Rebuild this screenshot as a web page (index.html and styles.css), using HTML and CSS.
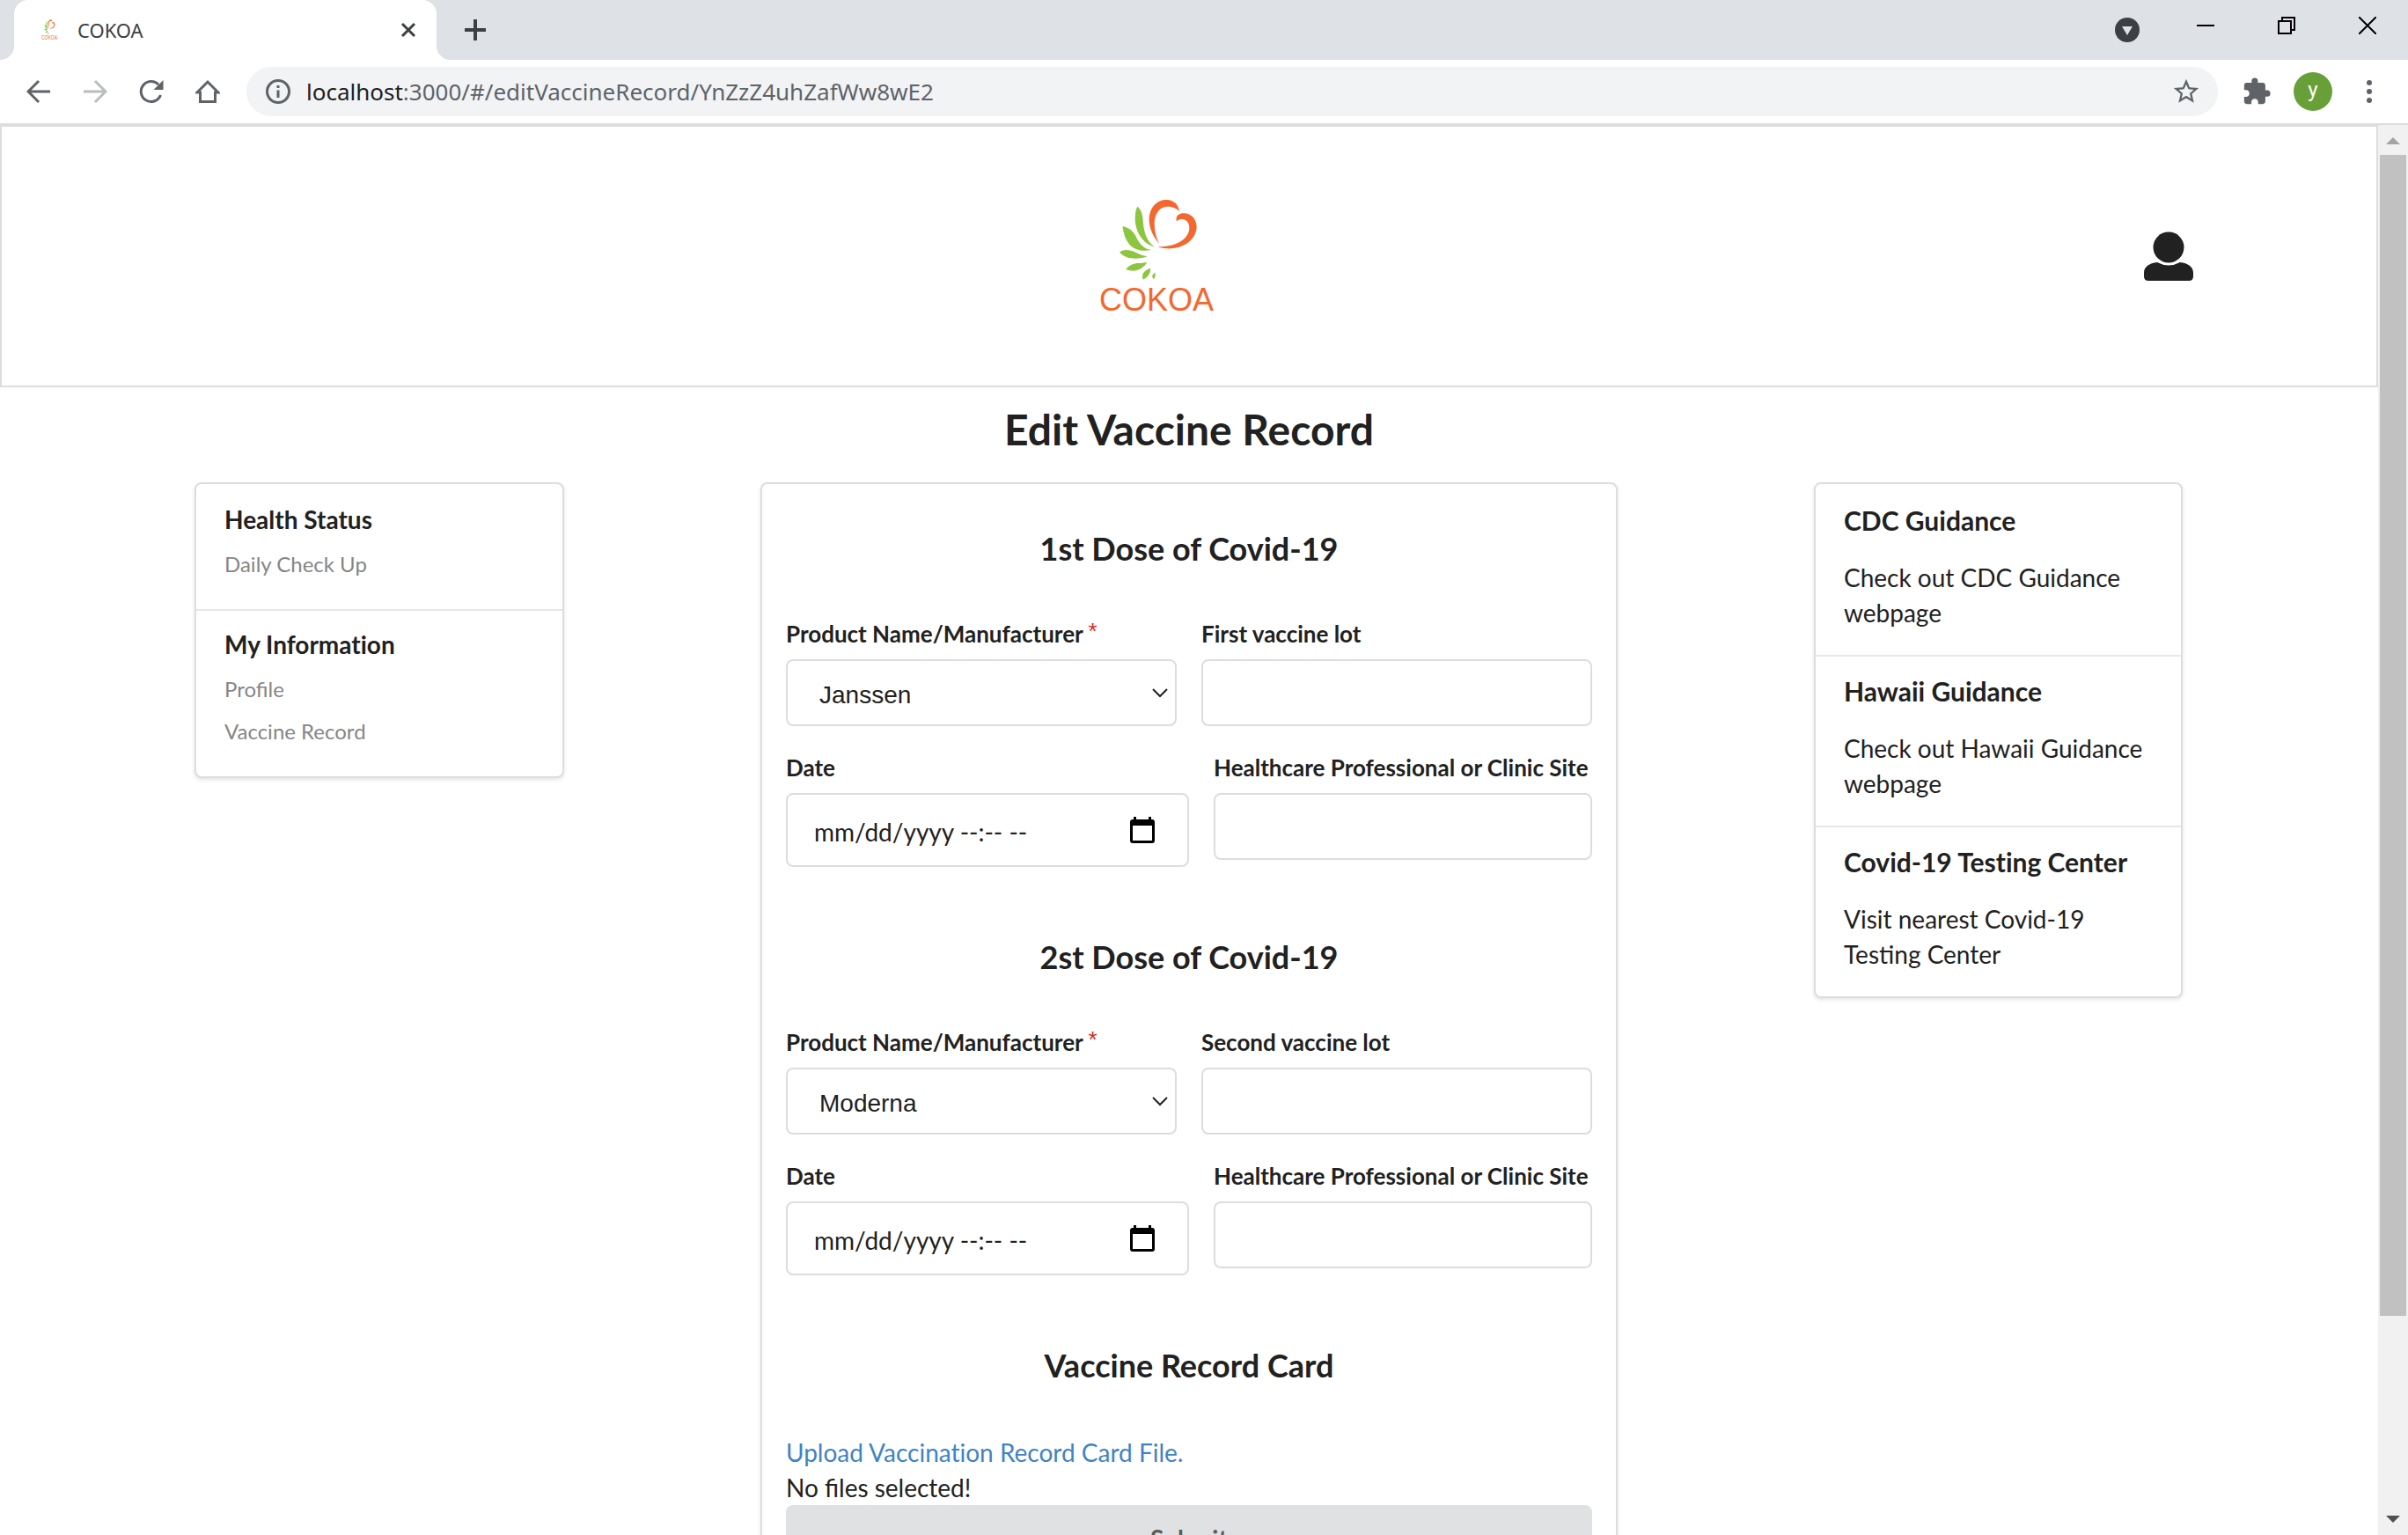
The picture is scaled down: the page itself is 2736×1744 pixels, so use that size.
FILE: index.html
```html
<!DOCTYPE html>
<html lang="en">
<head>
<meta charset="utf-8">
<title>COKOA</title>
<link rel="stylesheet" href="styles.css">
</head>
<body>
<div class="browser">
  <header class="tab-strip">
    <div class="tab">
      <svg class="favicon" preserveAspectRatio="none" viewBox="66 30 432 426" aria-hidden="true"><use href="#logo"/></svg>
      <span class="tab-title">COKOA</span>
      <button class="icon-button tab-close" aria-label="Close tab"><svg width="20" height="20" viewBox="0 0 20 20"><path d="M3 3L17 17M17 3L3 17" stroke="#3c4043" stroke-width="3"/></svg></button>
    </div>
    <button class="icon-button new-tab" aria-label="New tab"><svg width="24" height="24" viewBox="0 0 24 24"><path d="M12 0V24M0 12H24" stroke="#3c4043" stroke-width="4"/></svg></button>
    <button class="icon-button tab-search" aria-label="Search tabs"><svg width="28" height="28" viewBox="0 0 28 28"><circle cx="14" cy="14" r="14" fill="#3c4043"/><path d="M8 10H20L14 20z" fill="#dee1e6"/></svg></button>
    <div class="window-controls">
      <button class="icon-button window-button" aria-label="Minimize"><svg width="20" height="20" viewBox="0 0 20 20"><path d="M0 10H20" stroke="#000" stroke-width="2"/></svg></button>
      <button class="icon-button window-button" aria-label="Restore"><svg width="20" height="20" viewBox="0 0 20 20"><path d="M1 5H15V19H1zM5 5V1H19V15H15" fill="none" stroke="#000" stroke-width="2"/></svg></button>
      <button class="icon-button window-button" aria-label="Close window"><svg width="20" height="20" viewBox="0 0 20 20"><path d="M0 0L20 20M20 0L0 20" stroke="#000" stroke-width="2"/></svg></button>
    </div>
  </header>

  <nav class="toolbar" aria-label="Browser toolbar">
    <button class="icon-button tool" aria-label="Back"><svg width="28" height="28" viewBox="0 0 28 28"><path d="M27 14H3M14 2L2 14L14 26" fill="none" stroke="#5f6368" stroke-width="3"/></svg></button>
    <button class="icon-button tool" aria-label="Forward"><svg width="28" height="28" viewBox="0 0 28 28"><path d="M1 14H25M14 2L26 14L14 26" fill="none" stroke="#babcbe" stroke-width="3"/></svg></button>
    <button class="icon-button tool" aria-label="Reload"><svg width="28" height="28" viewBox="0 0 28 28"><path d="M24.500 18A11.500 11.500 0 1 1 22 6" fill="none" stroke="#5f6368" stroke-width="3"/><path d="M27.500 1V12H16.500z" fill="#5f6368"/></svg></button>
    <button class="icon-button tool" aria-label="Home"><svg width="28" height="28" viewBox="0 0 28 28"><path d="M2 15L14 3L26 15H22.500V25.500H5.500V15z" fill="none" stroke="#5f6368" stroke-width="3"/></svg></button>
    <div class="omnibox">
      <svg width="28" height="28" viewBox="0 0 28 28"><circle cx="14" cy="14" r="12.500" fill="none" stroke="#5f6368" stroke-width="3"/><path d="M14 12.500V21M14 7V10" stroke="#5f6368" stroke-width="3"/></svg>
      <span class="url"><span class="host">localhost</span>:3000/#/editVaccineRecord/YnZzZ4uhZafWw8wE2</span>
      <button class="icon-button star" aria-label="Bookmark this page"><svg width="34" height="34" viewBox="0 0 24 24"><path d="M22 9.240l-7.190-.620L12 2 9.190 8.630 2 9.240l5.460 4.730L5.820 21 12 17.270 18.180 21l-1.630-7.030L22 9.240zM12 15.400l-3.760 2.270 1-4.280-3.320-2.880 4.380-.380L12 6.100l1.710 4.040 4.380.380-3.320 2.880 1 4.280L12 15.400z" fill="#5f6368"/></svg></button>
    </div>
    <button class="icon-button tool" aria-label="Extensions"><svg width="34" height="34" viewBox="0 0 24 24"><path d="M20.500 11H19V7c0-1.100-.900-2-2-2h-4V3.500a2.500 2.500 0 0 0-5 0V5H4c-1.100 0-1.990.900-1.990 2v3.800H3.500c1.490 0 2.700 1.210 2.700 2.700s-1.210 2.700-2.700 2.700H2V20c0 1.100.900 2 2 2h3.800v-1.500c0-1.490 1.210-2.700 2.700-2.700s2.700 1.210 2.700 2.700V22H17c1.100 0 2-.900 2-2v-4h1.500a2.500 2.500 0 0 0 0-5z" fill="#5f6368"/></svg></button>
    <button class="avatar" aria-label="Profile y">y</button>
    <button class="icon-button tool" aria-label="Menu"><svg width="28" height="28" viewBox="0 0 28 28"><g fill="#5f6368"><circle cx="14" cy="4" r="3"/><circle cx="14" cy="14" r="3"/><circle cx="14" cy="24" r="3"/></g></svg></button>
  </nav>

  <div class="viewport">
    <div class="page">
      <header class="site-header">
        <a href="#/" aria-label="COKOA home">
          <svg width="144" height="142" viewBox="66 30 432 426">
            <g id="logo">
              <g fill="#f4672e">
                <path d="M291 200C265 170 257 140 257 118C258 75 285 51 317 51C340 52 357 66 360 90C348 78 335 74 320 74C295 74 276 95 275 130C275 155 280 180 291 200z"/>
                <path d="M287 211C340 212 392 190 394 148C395 128 382 117 368 117C360 117 355 120 351 124C346 108 356 97 376 97C402 98 418 118 419 143C417 190 370 220 315 217C303 216 294 214 287 211z"/>
                <text x="282" y="430" text-anchor="middle" font-family="Liberation Sans, Arial, sans-serif" font-size="108">COKOA</text>
              </g>
              <g fill="#8cc63f">
                <path d="M217 74C228 82 234 96 236 120C238 155 245 190 276 212C240 203 209 165 209 115C209 95 212 82 217 74z"/>
                <path d="M166 142C190 145 205 160 215 182C225 202 240 218 265 222C235 228 205 222 190 203C172 182 170 160 166 142z"/>
                <path d="M156 230C165 222 178 220 195 224C215 230 230 242 252 243C235 250 215 253 195 250C175 247 165 238 156 230z"/>
                <path d="M178 288C188 274 205 267 222 267C235 267 243 265 250 264C240 280 225 292 205 293C195 293 186 291 178 288z"/>
                <path d="M261 284C263 300 255 313 236 323C230 305 238 292 261 284z"/>
                <path d="M278 299C279 308 278 315 273 321C266 316 264 306 278 299z"/>
              </g>
            </g>
          </svg>
        </a>
        <a href="#/profile" aria-label="Account"><svg width="56" height="56" viewBox="0 0 56 56"><circle cx="28" cy="18" r="17.500" fill="#212121"/><path d="M15 35Q28 42 41 35C50 36 56 40 56 47V51Q56 56 51 56H5Q0 56 0 51V47C0 40 6 36 15 35z" fill="#212121"/></svg></a>
      </header>

      <h1 class="page-title">Edit Vaccine Record</h1>

      <div class="columns">
        <aside class="card">
          <section class="card-section nav-section">
            <h2 class="card-title">Health Status</h2>
            <a class="nav-link" href="#/checkup">Daily Check Up</a>
          </section>
          <section class="card-section nav-section">
            <h2 class="card-title">My Information</h2>
            <a class="nav-link" href="#/profile">Profile</a>
            <a class="nav-link" href="#/vaccine">Vaccine Record</a>
          </section>
        </aside>

        <form class="card form-card">
          <section class="form-section">
            <h2 class="form-heading">1st Dose of Covid-19</h2>
            <div class="row">
              <div class="field">
                <label for="product1">Product Name/Manufacturer <span class="required">*</span></label>
                <select id="product1" class="control"><option>Janssen</option><option>Moderna</option><option>Pfizer</option></select>
              </div>
              <div class="field"><label for="lot1">First vaccine lot</label><input id="lot1" class="control" type="text"></div>
            </div>
            <div class="row row-date">
              <div class="field">
                <label for="date1">Date</label>
                <div class="control date-control">
                  <input id="date1" class="date-input" type="text" placeholder="mm/dd/yyyy --:-- --">
                  <button class="icon-button" type="button" aria-label="Open calendar"><svg width="28" height="30" viewBox="0 0 28 30"><path d="M4 0H7V3H21V0H24V3H25Q28 3 28 6V27Q28 30 25 30H3Q0 30 0 27V6Q0 3 3 3H4zM3 10V27H25V10z" fill-rule="evenodd"/></svg></button>
                </div>
              </div>
              <div class="field"><label for="site1">Healthcare Professional or Clinic Site</label><input id="site1" class="control" type="text"></div>
            </div>
          </section>

          <section class="form-section">
            <h2 class="form-heading">2st Dose of Covid-19</h2>
            <div class="row">
              <div class="field">
                <label for="product2">Product Name/Manufacturer <span class="required">*</span></label>
                <select id="product2" class="control"><option>Moderna</option><option>Janssen</option><option>Pfizer</option></select>
              </div>
              <div class="field"><label for="lot2">Second vaccine lot</label><input id="lot2" class="control" type="text"></div>
            </div>
            <div class="row row-date">
              <div class="field">
                <label for="date2">Date</label>
                <div class="control date-control">
                  <input id="date2" class="date-input" type="text" placeholder="mm/dd/yyyy --:-- --">
                  <button class="icon-button" type="button" aria-label="Open calendar"><svg width="28" height="30" viewBox="0 0 28 30"><path d="M4 0H7V3H21V0H24V3H25Q28 3 28 6V27Q28 30 25 30H3Q0 30 0 27V6Q0 3 3 3H4zM3 10V27H25V10z" fill-rule="evenodd"/></svg></button>
                </div>
              </div>
              <div class="field"><label for="site2">Healthcare Professional or Clinic Site</label><input id="site2" class="control" type="text"></div>
            </div>
          </section>

          <section class="form-section">
            <h2 class="form-heading">Vaccine Record Card</h2>
            <a class="upload" href="#upload">Upload Vaccination Record Card File.</a>
            <p class="upload-status">No files selected!</p>
            <button class="submit" type="submit">Submit</button>
          </section>
        </form>

        <aside class="card guidance">
          <section class="card-section">
            <h2 class="card-title">CDC Guidance</h2>
            <p class="card-text">Check out CDC Guidance webpage</p>
          </section>
          <section class="card-section">
            <h2 class="card-title">Hawaii Guidance</h2>
            <p class="card-text">Check out Hawaii Guidance webpage</p>
          </section>
          <section class="card-section">
            <h2 class="card-title">Covid-19 Testing Center</h2>
            <p class="card-text">Visit nearest Covid-19 Testing Center</p>
          </section>
        </aside>
      </div>
    </div>

    <div class="scrollbar" aria-hidden="true">
      <svg class="scroll-arrow" viewBox="0 0 34 34"><path d="M9 22L17 14L25 22z" fill="#a3a3a3"/></svg>
      <div class="scroll-track"><div class="scroll-thumb"></div></div>
      <svg class="scroll-arrow" viewBox="0 0 34 34"><path d="M9 12L17 20L25 12z" fill="#505050"/></svg>
    </div>
  </div>
</div>
</body>
</html>
```
FILE: styles.css
```css
* { box-sizing: border-box; }

body {
  margin: 0;
  font-family: Lato, "Open Sans", sans-serif;
  font-size: 28px;
  line-height: 40px;
  color: #212121;
  background: #fff;
}

h1, h2, p { margin: 0; }
a { color: #4183c4; text-decoration: none; }
svg { display: block; flex: none; }

.browser {
  display: flex;
  flex-direction: column;
  height: 100vh;
  overflow: hidden;
}

.icon-button {
  display: flex;
  flex: none;
  align-items: center;
  justify-content: center;
  padding: 0;
  border: 0;
  background: none;
}

/* Tab strip */
.tab-strip {
  display: flex;
  flex: none;
  height: 68px;
  padding-left: 16px;
  background: #dee1e6;
}

.tab {
  position: relative;
  display: flex;
  align-items: center;
  width: 480px;
  padding: 0 22px 0 30px;
  border-radius: 16px 16px 0 0;
  background: #fff;
}

.tab::before,
.tab::after {
  content: "";
  position: absolute;
  bottom: 0;
  width: 16px;
  height: 16px;
}

.tab::before {
  left: -16px;
  background: radial-gradient(circle at 0 0, transparent 16px, #fff 16px);
}

.tab::after {
  right: -16px;
  background: radial-gradient(circle at 100% 0, transparent 16px, #fff 16px);
}

.favicon { width: 20px; height: 26px; margin-right: 22px; }

.tab-title,
.url { font-family: "Noto Sans", "Open Sans", sans-serif; }

.tab-title { font-size: 22px; color: #3c4043; }
.tab-close { margin-left: auto; }
.new-tab { width: 56px; margin-left: 16px; }
.tab-search { width: 86px; margin-left: auto; }
.window-controls { display: flex; height: 58px; }
.window-button { width: 92px; }

/* Toolbar */
.toolbar {
  display: flex;
  flex: none;
  align-items: center;
  gap: 8px;
  height: 74px;
  padding: 0 16px;
  border-bottom: 2px solid #ddd;
}

.tool { width: 56px; height: 56px; }

.omnibox {
  display: flex;
  flex: 1;
  align-items: center;
  gap: 18px;
  height: 56px;
  margin: 0 8px;
  padding: 0 19px 0 22px;
  border-radius: 28px;
  background: #f1f3f4;
}

.url { font-size: 26px; color: #5f6368; }
.host { color: #202124; }
.star { margin-left: auto; }

.avatar {
  width: 44px;
  height: 44px;
  margin: 0 6px;
  padding: 0 0 4px;
  border: 0;
  border-radius: 50%;
  background: #689f38;
  color: #fff;
  font: 24px Roboto, sans-serif;
}

/* Page */
.viewport {
  display: flex;
  flex: 1;
  min-height: 0;
}

.page { flex: 1; overflow: hidden; }

.site-header {
  display: flex;
  align-items: center;
  justify-content: space-between;
  height: 298px;
  padding: 0 208px 0 45.9%;
  border: 2px solid #ddd;
}

.page-title {
  margin: 18px 0 30px;
  font-size: 48px;
  line-height: 60px;
  text-align: center;
}

.columns {
  display: grid;
  grid-template-columns: 420fr 974fr 419fr;
  align-items: start;
  column-gap: 223px;
  padding: 0 222px 0 221px;
}

.card {
  padding-top: 2px;
  border: 2px solid #ddd;
  border-radius: 8px;
  background: #fff;
  box-shadow: 0 2px 4px rgba(34, 36, 38, .12);
}

.card-section { padding: 21px 32px 28px; }
.nav-section { padding: 20px 32px 33px; }
.card-section + .card-section { border-top: 2px solid #e8e8e8; }

.card-title {
  font-size: 28px;
  line-height: 36px;
  font-variant-ligatures: none;
}

.guidance .card-title { font-size: 30px; }
.card-text { margin-top: 27px; }

.nav-link {
  display: block;
  margin-top: 12px;
  font-size: 24px;
  line-height: 36px;
  color: #868686;
}

.card-title + .nav-link { margin-top: 15px; }

/* Form */
.form-card { padding: 50px 27px; }
.form-section + .form-section { margin-top: 79px; }

.form-heading {
  margin-bottom: 56px;
  font-size: 36px;
  line-height: 46px;
  text-align: center;
}

.row {
  display: grid;
  grid-template-columns: 1fr 1fr;
  align-items: start;
  gap: 28px;
}

.row-date {
  grid-template-columns: 458fr 430fr;
  margin-top: 29px;
}

.field { display: flex; flex-direction: column; gap: 11px; min-width: 0; }

.field label {
  font-size: 26px;
  font-weight: bold;
  line-height: 36px;
  white-space: nowrap;
}

.required {
  font-family: "Liberation Sans", Arial, sans-serif;
  font-weight: normal;
  line-height: 0;
  vertical-align: 4px;
  color: #db2828;
}

.control {
  width: 100%;
  height: 76px;
  margin: 0;
  padding: 4px 28px 0;
  border: 2px solid #ddd;
  border-radius: 8px;
  background: #fff;
  color: #212121;
  font: 28px Lato, sans-serif;
}

select.control {
  appearance: none;
  padding: 4px 36px 0;
  font-family: "Liberation Sans", Arial, sans-serif;
  background: #fff url("data:image/svg+xml,%3Csvg xmlns='http://www.w3.org/2000/svg' width='18' height='11'%3E%3Cpath d='M1 1L9 9L17 1' fill='none' stroke='%23212121' stroke-width='2'/%3E%3C/svg%3E") no-repeat right 8px center;
}

.date-control {
  display: flex;
  align-items: center;
  height: 84px;
  padding: 0 37px 0 30px;
}

.date-input {
  flex: 1;
  min-width: 0;
  padding: 4px 0 0;
  border: 0;
  background: none;
  color: inherit;
  font: inherit;
}

.date-input::placeholder { color: #212121; opacity: 1; }

.upload { display: block; font-variant-ligatures: none; }

.submit {
  width: 100%;
  height: 76px;
  border: 0;
  border-radius: 8px;
  background: #e0e1e2;
  color: #5a5a5a;
  font: bold 28px Lato, sans-serif;
}

/* Scrollbar */
.scrollbar {
  display: flex;
  flex: none;
  flex-direction: column;
  width: 34px;
  padding: 0 2px;
  background: #f1f1f1;
}

.scroll-arrow { width: 34px; height: 34px; margin: 0 -2px; }
.scroll-track { flex: 1; }
.scroll-thumb { height: 86%; background: #c1c1c1; }
```
